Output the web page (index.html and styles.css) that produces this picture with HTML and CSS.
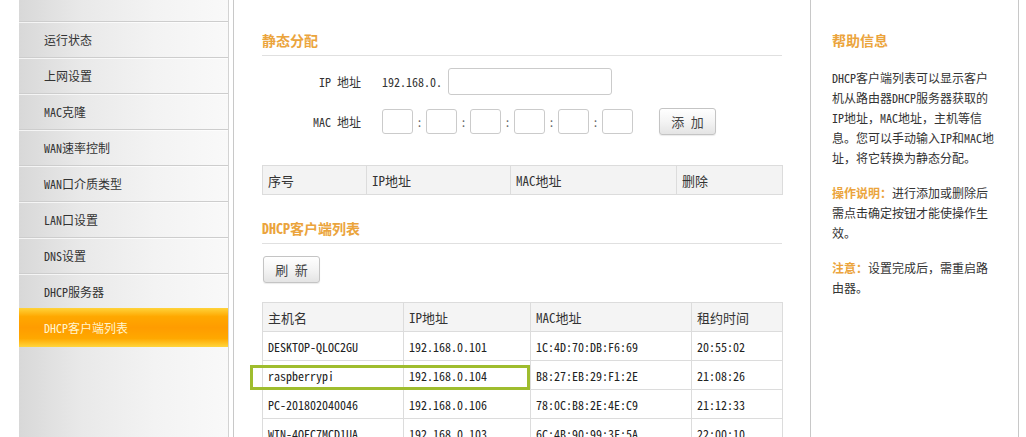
FILE: index.html
```html
<!DOCTYPE html>
<html lang="zh-CN">
<head>
<meta charset="utf-8">
<title>DHCP客户端列表</title>
<link rel="stylesheet" href="styles.css">
</head>
<body>
<div class="page">
  <nav class="sidebar">
    <div class="side-top"></div>
    <ul class="menu">
      <li>运行状态</li>
      <li>上网设置</li>
      <li>MAC克隆</li>
      <li>WAN速率控制</li>
      <li>WAN口介质类型</li>
      <li>LAN口设置</li>
      <li>DNS设置</li>
      <li>DHCP服务器</li>
      <li class="active">DHCP客户端列表</li>
    </ul>
  </nav>

  <main class="main">
    <h2 class="section-title">静态分配</h2>
    <div class="form-row">
      <label class="form-label">IP 地址</label>
      <span class="ip-prefix">192.168.0.</span>
      <input class="ip-input" type="text">
    </div>
    <div class="form-row form-row-mac">
      <label class="form-label">MAC 地址</label>
      <div class="mac-group">
        <input class="mac-input" type="text"><span class="colon">:</span><input class="mac-input" type="text"><span class="colon">:</span><input class="mac-input" type="text"><span class="colon">:</span><input class="mac-input" type="text"><span class="colon">:</span><input class="mac-input" type="text"><span class="colon">:</span><input class="mac-input" type="text">
      </div>
      <button class="btn btn-add" type="button">添 加</button>
    </div>

    <table class="grid static-table">
      <colgroup><col class="c1"><col class="c2"><col class="c3"><col class="c4"></colgroup>
      <tr><th>序号</th><th>IP地址</th><th>MAC地址</th><th>删除</th></tr>
    </table>

    <h2 class="section-title section-title-2">DHCP客户端列表</h2>
    <button class="btn btn-refresh" type="button">刷 新</button>

    <div class="client-wrap">
      <table class="grid client-table">
        <colgroup><col class="d1"><col class="d2"><col class="d3"><col class="d4"></colgroup>
        <tr class="head"><th>主机名</th><th>IP地址</th><th>MAC地址</th><th>租约时间</th></tr>
        <tr><td>DESKTOP-QLOC2GU</td><td>192.168.0.101</td><td>1C:4D:70:DB:F6:69</td><td>20:55:02</td></tr>
        <tr><td>raspberrypi</td><td>192.168.0.104</td><td>B8:27:EB:29:F1:2E</td><td>21:08:26</td></tr>
        <tr><td>PC-201802040046</td><td>192.168.0.106</td><td>78:0C:B8:2E:4E:C9</td><td>21:12:33</td></tr>
        <tr><td>WIN-4OEC7MCD1UA</td><td>192.168.0.103</td><td>6C:4B:90:99:3F:5A</td><td>22:00:10</td></tr>
      </table>
      <div class="row-highlight"></div>
    </div>
  </main>

  <aside class="help">
    <h3 class="help-title">帮助信息</h3>
    <p class="help-text">DHCP客户端列表可以显示客户机从路由器DHCP服务器获取的IP地址，MAC地址，主机等信息。您可以手动输入IP和MAC地址，将它转换为静态分配。</p>
    <p class="help-text"><span class="help-key">操作说明：</span>进行添加或删除后需点击确定按钮才能使操作生效。</p>
    <p class="help-text"><span class="help-key">注意：</span>设置完成后，需重启路由器。</p>
  </aside>
</div>
</body>
</html>
```

FILE: styles.css
```css
* {
  box-sizing: border-box;
}

html,
body {
  margin: 0;
  padding: 0;
  background: #fff;
}

body {
  font-family: "Noto Sans Mono CJK SC", "Noto Sans CJK SC", "DejaVu Sans", sans-serif;
  font-size: 12px;
  color: #333;
  overflow: hidden;
}

.page {
  display: flex;
  height: 437px;
}

/* ---------- sidebar ---------- */
.sidebar {
  margin-left: 19px;
  width: 210px;
  flex: none;
  border-right: 1px solid #d3d3d3;
  background: linear-gradient(to right, #d8d8d8 0%, #e9e9e9 30%, #f3f3f3 65%, #f9f9f9 100%);
}

.side-top {
  height: 22px;
  border-bottom: 1px solid #cdcdcd;
}

.menu {
  list-style: none;
  margin: 0;
  padding: 0;
}

.menu li {
  height: 36px;
  line-height: 35px;
  padding-left: 25px;
  border-bottom: 1px solid #cdcdcd;
  box-shadow: inset 0 1px 0 rgba(255, 255, 255, 0.7);
  color: #333;
  white-space: nowrap;
}

.menu li.active {
  margin-top: -2px;
  height: 39px;
  line-height: 39px;
  border-bottom: none;
  box-shadow: none;
  color: #fff6cf;
  background: linear-gradient(to bottom, #ffd33a 0%, #ffa800 22%, #ff9c00 50%, #ffa800 78%, #ffd53c 100%);
}

/* ---------- main ---------- */
.main {
  margin-left: 4px;
  width: 578px;
  flex: none;
  border-left: 1px solid #c8c8c8;
  border-right: 1px solid #c8c8c8;
  padding: 30px 28px 0 28px;
}

.section-title {
  margin: 0;
  height: 26px;
  line-height: 20px;
  padding-bottom: 5px;
  border-bottom: 1px solid #e0e0e0;
  font-size: 14px;
  font-weight: bold;
  color: #eba43c;
}

.section-title-2 {
  margin-top: 23px;
}

.form-row {
  display: flex;
  align-items: center;
  height: 27px;
  margin-top: 12px;
}

.form-row-mac {
  margin-top: 13px;
}

.form-label {
  width: 99px;
  margin-right: 21px;
  text-align: right;
  white-space: nowrap;
}

.ip-prefix {
  width: 66px;
}

.ip-input {
  width: 164px;
  height: 27px;
  border: 1px solid #cbcbcb;
  border-radius: 3px;
  background: #fff;
  padding: 0 4px;
  font: inherit;
}

.mac-group {
  display: flex;
  align-items: center;
}

.mac-input {
  width: 31px;
  height: 25px;
  border: 1px solid #cbcbcb;
  border-radius: 3px;
  background: #fff;
  padding: 0;
  font: inherit;
}

.colon {
  width: 13px;
  text-align: center;
  color: #666;
}

.btn {
  width: 57px;
  height: 27px;
  border: 1px solid #c4c4c4;
  border-radius: 3px;
  background: linear-gradient(to bottom, #ffffff 0%, #f4f4f4 50%, #e4e4e4 100%);
  box-shadow: 0 1px 1px rgba(0, 0, 0, 0.08);
  font-family: inherit;
  font-size: 13px;
  color: #444;
  padding: 0;
}

.btn-add {
  margin-left: 26px;
}

.btn-refresh {
  display: block;
  margin: 12px 0 0 1px;
}

/* ---------- tables ---------- */
.grid {
  width: 520px;
  border-collapse: collapse;
  table-layout: fixed;
}

.grid th,
.grid td {
  height: 29px;
  padding: 0 0 0 5px;
  border: 1px solid #dcdcdc;
  text-align: left;
  font-weight: normal;
  white-space: nowrap;
}

.grid th {
  font-size: 13px;
}

.static-table {
  margin-top: 30px;
  background: #f3f3f3;
}

.static-table .c1 { width: 104px; }
.static-table .c2 { width: 144px; }
.static-table .c3 { width: 166px; }
.static-table .c4 { width: 106px; }

.client-wrap {
  position: relative;
  margin-top: 19px;
}

.client-table .d1 { width: 141px; }
.client-table .d2 { width: 127px; }
.client-table .d3 { width: 161px; }
.client-table .d4 { width: 91px; }

.client-table .head {
  background: #f4f4f4;
}

.client-table td {
  font-size: 12px;
  color: #222;
}

.row-highlight {
  position: absolute;
  left: -12px;
  top: 63px;
  width: 280px;
  height: 25px;
  border: 3px solid #9fbd2e;
}

/* ---------- help ---------- */
.help {
  width: 208px;
  flex: none;
  border-right: 1px solid #c8c8c8;
  padding: 30px 0 0 21px;
}

.help-title {
  margin: 0 0 18px;
  line-height: 20px;
  font-size: 14px;
  font-weight: bold;
  color: #eba43c;
}

.help-text {
  width: 165px;
  margin: 0 0 15px;
  line-height: 20px;
  color: #333;
}

.help-key {
  font-weight: bold;
  color: #eba43c;
}
```
